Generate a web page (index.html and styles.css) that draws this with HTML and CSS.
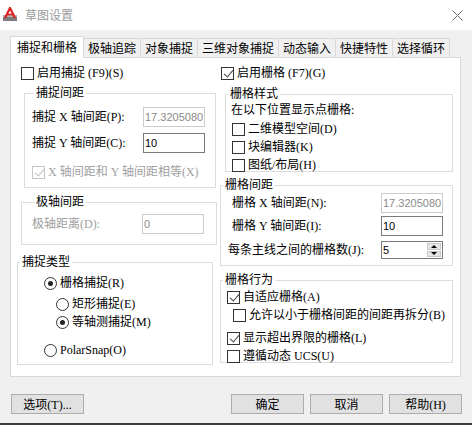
FILE: index.html
```html
<!DOCTYPE html>
<html lang="zh-CN">

<head>
    <meta charset="UTF-8">
    <title>草图设置</title>
    <link rel="stylesheet" href="styles.css">
</head>

<body>
    <div class="dialog">
        <!--标题栏-->
        <div class="titlebar">
            <svg class="app-icon" width="14" height="14" viewBox="0 0 14 14">
                <rect x="0" y="8" width="14" height="6" fill="#7d7d7d"/>
                <rect x="0" y="8" width="14" height="2" fill="#b5b5b5"/>
                <path d="M2 11 L7 1 L12 11" fill="none" stroke="#e02020" stroke-width="2.2"/>
                <path d="M4.5 7.5 H9.5" stroke="#e02020" stroke-width="1.6"/>
            </svg>
            <span class="title">草图设置</span>
            <svg class="close" width="11" height="11" viewBox="0 0 11 11">
                <path d="M0.5 0.5 L10.5 10.5 M10.5 0.5 L0.5 10.5" stroke="#6a6a6a" stroke-width="1"/>
            </svg>
        </div>

        <div class="content">
            <!--选项卡-->
            <ul class="tabs">
                <li class="current">捕捉和栅格</li>
                <li>极轴追踪</li>
                <li>对象捕捉</li>
                <li>三维对象捕捉</li>
                <li>动态输入</li>
                <li>快捷特性</li>
                <li class="last">选择循环</li>
            </ul>

            <div class="panel">
                <!--左边：捕捉-->
                <div class="col">
                    <div class="check snap-on"><span class="cb"></span>启用捕捉 (F9)(S)</div>

                    <div class="group snap-spacing">
                        <div class="group-title">捕捉间距</div>
                        <div class="field f1"><span class="label">捕捉 X 轴间距(P):</span><input class="input" disabled value="17.3205080"></div>
                        <div class="field f2"><span class="label">捕捉 Y 轴间距(C):</span><input class="input" value="10"></div>
                        <div class="check equal disabled"><span class="cb on"></span>X 轴间距和 Y 轴间距相等(X)</div>
                    </div>

                    <div class="group polar">
                        <div class="group-title">极轴间距</div>
                        <div class="field disabled"><span class="label">极轴距离(D):</span><input class="input" disabled value="0"></div>
                    </div>

                    <div class="group snap-type">
                        <div class="group-title">捕捉类型</div>
                        <div class="check r1"><span class="rb on"></span>栅格捕捉(R)</div>
                        <div class="check r2"><span class="rb"></span>矩形捕捉(E)</div>
                        <div class="check r3"><span class="rb on"></span>等轴测捕捉(M)</div>
                        <div class="check r4"><span class="rb"></span>PolarSnap(O)</div>
                    </div>
                </div>

                <!--右边：栅格-->
                <div class="col">
                    <div class="check grid-on"><span class="cb on"></span>启用栅格 (F7)(G)</div>

                    <div class="group grid-style">
                        <div class="group-title">栅格样式</div>
                        <div class="hint">在以下位置显示点栅格:</div>
                        <div class="check s1"><span class="cb"></span>二维模型空间(D)</div>
                        <div class="check s2"><span class="cb"></span>块编辑器(K)</div>
                        <div class="check s2"><span class="cb"></span>图纸/布局(H)</div>
                    </div>

                    <div class="group grid-spacing">
                        <div class="group-title">栅格间距</div>
                        <div class="field g1"><span class="label">栅格 X 轴间距(N):</span><input class="input" disabled value="17.3205080"></div>
                        <div class="field g2"><span class="label">栅格 Y 轴间距(I):</span><input class="input" value="10"></div>
                        <div class="field g3"><span class="label">每条主线之间的栅格数(J):</span>
                            <div class="spin">
                                <span class="spin-val">5</span>
                                <span class="spin-btns"><span class="up"></span><span class="down"></span></span>
                            </div>
                        </div>
                    </div>

                    <div class="group grid-behave">
                        <div class="group-title">栅格行为</div>
                        <div class="check b1"><span class="cb on"></span>自适应栅格(A)</div>
                        <div class="check b2"><span class="cb"></span>允许以小于栅格间距的间距再拆分(B)</div>
                        <div class="check b3"><span class="cb on"></span>显示超出界限的栅格(L)</div>
                        <div class="check b4"><span class="cb"></span>遵循动态 UCS(U)</div>
                    </div>
                </div>
            </div>

            <!--底部按钮-->
            <div class="buttons">
                <button class="btn options">选项(T)...</button>
                <button class="btn">确定</button>
                <button class="btn">取消</button>
                <button class="btn">帮助(H)</button>
            </div>
        </div>
    </div>
</body>

</html>
```

FILE: styles.css
```css
* {
    margin: 0;
    padding: 0;
    box-sizing: border-box;
}

body {
    width: 472px;
    height: 425px;
    overflow: hidden;
    background: #3a3a3a;
    font-family: "Liberation Serif", "Noto Sans CJK SC", serif;
    font-size: 12px;
    line-height: 16px;
    color: #000;
}

.dialog {
    height: 423px;
    background: #f0f0f0;
}

/* 标题栏 */
.titlebar {
    height: 30px;
    background: #fff;
    display: flex;
    align-items: center;
}

.app-icon {
    margin: 0 8px 2px 3px;
}

.title {
    flex: 1;
    color: #9a9a9a;
    font-family: "Noto Sans CJK SC", sans-serif;
    font-size: 12px;
}

.close {
    margin-right: 9px;
}

/* 选项卡 */
.tabs {
    list-style: none;
    display: flex;
    align-items: flex-end;
    height: 21px;
    margin: 6px 0 0 10px;
}

.tabs li {
    height: 19px;
    line-height: 18px;
    padding: 0 4px;
    border: 1px solid #d9d9d9;
    border-bottom: none;
    border-right: none;
    background: #f0f0f0;
    font-family: "Noto Sans CJK SC", sans-serif;
}

.tabs .last {
    border-right: 1px solid #d9d9d9;
}

.tabs .current {
    position: relative;
    z-index: 1;
    height: 22px;
    line-height: 20px;
    margin-bottom: -1px;
    padding: 0 6px;
    background: #fff;
    border-right: 1px solid #d9d9d9;
}

.tabs .current + li {
    border-left: none;
}

/* 面板 */
.panel {
    width: 451px;
    height: 320px;
    margin-left: 10px;
    background: #fff;
    border: 1px solid #d9d9d9;
    display: grid;
    grid-template-columns: 208px 1fr;
    align-items: start;
}

.group {
    border: 1px solid #dcdcdc;
}

.group-title {
    display: table;
    margin: -8px 0 0 2px;
    padding: 0 2px;
    line-height: 14px;
    background: #fff;
}

.check {
    display: flex;
    align-items: center;
    height: 16px;
    white-space: nowrap;
}

.cb,
.rb {
    width: 13px;
    height: 13px;
    margin-right: 3px;
    border: 1px solid #333;
    background: #fff;
    flex-shrink: 0;
}

.cb.on::after {
    content: "";
    display: block;
    width: 4px;
    height: 8px;
    margin: 0 0 0 4px;
    border: solid #444;
    border-width: 0 1px 1px 0;
    transform: rotate(40deg);
}

.rb {
    border-radius: 50%;
    padding: 3px;
}

.rb.on::after {
    content: "";
    display: block;
    width: 5px;
    height: 5px;
    border-radius: 50%;
    background: #222;
}

.disabled {
    color: #a0a0a0;
}

.disabled .cb {
    border-color: #c4c4c4;
}

.disabled .cb.on::after {
    border-color: #c0c0c0;
}

.field {
    display: flex;
    align-items: center;
    height: 20px;
    white-space: pre;
}

.label {
    flex: 1;
}

.input {
    width: 62px;
    height: 20px;
    padding: 0 1px;
    border: 1px solid #7a7a7a;
    background: #fff;
    font-family: "Liberation Sans", sans-serif;
    font-size: 11px;
    color: #000;
    outline: none;
}

.input:disabled {
    border-color: #cccccc;
    color: #8a8a8a;
    background: #fff;
}

/* 左边 */
.snap-on {
    margin: 7px 0 0 10px;
}

.snap-spacing {
    width: 192px;
    height: 95px;
    margin: 12px 0 0 13px;
    padding-left: 7px;
}

.snap-spacing .input {
    margin-right: 10px;
}

.snap-spacing .f1 {
    margin-top: 7px;
}

.snap-spacing .f2 {
    margin-top: 6px;
}

.snap-spacing .equal {
    margin-top: 11px;
}

.polar {
    width: 196px;
    height: 43px;
    margin: 14px 0 0 10px;
    padding-left: 10px;
}

.polar .field {
    margin-top: 5px;
}

.polar .input {
    margin-right: 12px;
}

.snap-type {
    width: 196px;
    height: 103px;
    margin: 17px 0 0 6px;
}

.snap-type .r1 {
    margin: 6px 0 0 26px;
}

.snap-type .r2 {
    margin: 5px 0 0 38px;
}

.snap-type .r3 {
    margin: 2px 0 0 38px;
}

.snap-type .r4 {
    margin: 12px 0 0 26px;
}

/* 右边 */
.grid-on {
    margin: 7px 0 0 2px;
}

.grid-style {
    width: 228px;
    height: 78px;
    margin: 13px 0 0 6px;
}

.hint {
    margin: 1px 0 0 5px;
}

.grid-style .s1 {
    margin: 3px 0 0 6px;
}

.grid-style .s2 {
    margin: 2px 0 0 6px;
}

.grid-spacing {
    width: 233px;
    height: 81px;
    margin: 13px 0 0 1px;
}

.grid-spacing .input,
.grid-spacing .spin {
    margin-right: 9px;
}

.grid-spacing .g1 {
    margin: 1px 0 0 11px;
}

.grid-spacing .g2 {
    margin: 3px 0 0 11px;
}

.grid-spacing .g3 {
    margin: 4px 0 0 7px;
}

.spin {
    width: 62px;
    height: 18px;
    display: flex;
    border: 1px solid #7a7a7a;
    font-family: "Liberation Sans", sans-serif;
    font-size: 11px;
    line-height: 16px;
}

.spin-val {
    flex: 1;
    padding-left: 1px;
}

.spin-btns {
    width: 16px;
    display: flex;
    flex-direction: column;
    gap: 1px;
    padding: 1px;
}

.spin-btns span {
    flex: 1;
    display: flex;
    align-items: center;
    justify-content: center;
    background: #e6e6e6;
    border: 1px solid #c8c8c8;
}

.spin-btns .up::after {
    content: "";
    border: 3px solid transparent;
    border-top: none;
    border-bottom: 3px solid #000;
}

.spin-btns .down::after {
    content: "";
    border: 3px solid transparent;
    border-bottom: none;
    border-top: 3px solid #000;
}

.grid-behave {
    width: 233px;
    height: 83px;
    margin: 14px 0 0 1px;
}

.grid-behave .b1 {
    margin: 2px 0 0 6px;
}

.grid-behave .b2 {
    margin: 2px 0 0 12px;
}

.grid-behave .b3 {
    margin: 7px 0 0 6px;
}

.grid-behave .b4 {
    margin: 2px 0 0 6px;
}

/* 底部按钮 */
.buttons {
    display: flex;
    gap: 6px;
    margin: 17px 10px 0 11px;
}

.btn {
    width: 73px;
    height: 20px;
    border: 1px solid #adadad;
    background: #e1e1e1;
    font-family: "Liberation Serif", "Noto Sans CJK SC", serif;
    font-size: 12px;
    color: #000;
}

.btn.options {
    margin-right: auto;
}
```
